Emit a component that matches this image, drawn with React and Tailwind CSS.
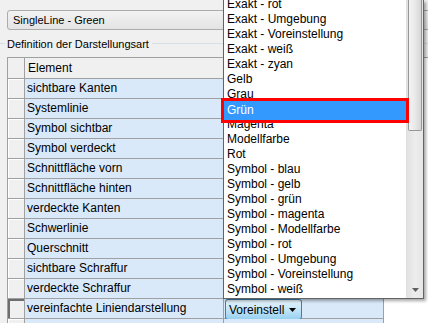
import React from "react";

const rows = [
  "sichtbare Kanten",
  "Systemlinie",
  "Symbol sichtbar",
  "Symbol verdeckt",
  "Schnittfläche vorn",
  "Schnittfläche hinten",
  "verdeckte Kanten",
  "Schwerlinie",
  "Querschnitt",
  "sichtbare Schraffur",
  "verdeckte Schraffur",
  "vereinfachte Liniendarstellung",
  "",
];

const colours = [
  "Exakt - rot",
  "Exakt - Umgebung",
  "Exakt - Voreinstellung",
  "Exakt - weiß",
  "Exakt - zyan",
  "Gelb",
  "Grau",
  "Grün",
  "Magenta",
  "Modellfarbe",
  "Rot",
  "Symbol - blau",
  "Symbol - gelb",
  "Symbol - grün",
  "Symbol - magenta",
  "Symbol - Modellfarbe",
  "Symbol - rot",
  "Symbol - Umgebung",
  "Symbol - Voreinstellung",
  "Symbol - weiß",
];

const DownTriangle = ({ className }) => (
  <svg width="7" height="4" viewBox="0 0 7 4" className={className}>
    <path d="M0 0h7L3.5 4z" fill="currentColor" />
  </svg>
);

const App = () => {
  return (
    <div className="relative w-[428px] h-[323px] overflow-hidden bg-[#f0f0f0] pt-[10px] font-['Liberation_Sans',Arial,sans-serif] text-black">
      {/* Top combobox */}
      <div className="ml-[7px] w-[440px] h-[20px] flex items-center pl-[5px] rounded-[3px] border border-[#acacac] bg-linear-to-b from-[#f2f2f2] to-[#e4e4e4] text-[11px]">
        SingleLine - Green
      </div>

      {/* Group box caption */}
      <div className="mt-[8px] h-[13px] flex items-start">
        <div className="w-[5px] h-px mt-[5px] bg-[#d5dfe5]" />
        <span className="ml-[2px] leading-[13px] text-[11px]">
          Definition der Darstellungsart
        </span>
        <div className="flex-1 h-px mt-[5px] ml-[3px] bg-[#d5dfe5]" />
      </div>

      {/* Grid */}
      <div className="mt-[6px] ml-[7px] border-l border-t border-[#a0a0a0] bg-white text-[12px]">
        {/* Header */}
        <div className="flex h-[21px]">
          <div className="w-[17px] shrink-0 border-r border-b border-[#a0a0a0] bg-[#f0f0f0]" />
          <div className="w-[199px] shrink-0 border-r border-b border-[#a0a0a0] bg-[#f0f0f0] pl-[3px] leading-[20px]">
            Element
          </div>
          <div className="w-[160px] shrink-0 border-r border-b border-[#a0a0a0] bg-[#f0f0f0]" />
        </div>

        {rows.map((label, i) => {
          const current = i === 11;
          return (
            <div key={i} className="flex h-[20px]">
              <div
                className={`w-[17px] shrink-0 border-r border-b border-[#a0a0a0] bg-[#f0f0f0] ${
                  current ? "shadow-[inset_2px_2px_0_#6d6d6d]" : "shadow-[inset_1px_1px_0_#ffffff]"
                }`}
              />
              <div className="w-[199px] shrink-0 border-r border-b border-[#a0a0a0] bg-[#dae9fa] pl-[2px] leading-[19px] whitespace-nowrap overflow-hidden">
                {label}
              </div>
              <div className="w-[160px] shrink-0 border-r border-b border-[#a0a0a0] bg-[#dae9fa]">
                {current && (
                  <div className="ml-[1px] w-[77px] h-[21px] flex items-center justify-between pl-[3px] pr-[5px] rounded-[3px] border border-[#3c7fb1] bg-linear-to-b from-[#e8f5fd] via-[#c4e5f6] to-[#98d1ef]">
                    <span className="leading-[18px]">Voreinstell</span>
                    <DownTriangle className="text-black" />
                  </div>
                )}
              </div>
            </div>
          );
        })}
      </div>

      {/* Open dropdown list */}
      <div className="absolute left-[223px] top-0 w-[201px] h-[299px] flex bg-white border-x border-b border-[#646464] shadow-[2px_2px_3px_rgba(0,0,0,0.35)] text-[12px]">
        <div className="flex-1 overflow-hidden">
          <div className="-mt-[3px]">
            {colours.map((c) => (
              <div
                key={c}
                className={`h-[15px] leading-[15px] pl-[3px] whitespace-nowrap ${
                  c === "Grün" ? "bg-[#3399ff] text-white" : ""
                }`}
              >
                {c}
              </div>
            ))}
          </div>
        </div>

        {/* Scrollbar */}
        <div className="w-[17px] shrink-0 flex flex-col bg-linear-to-r from-[#e2e2e2] via-[#ededed] to-[#e6e6e6] border-l border-[#e0e0e0]">
          <div className="mx-[1px] h-[131px] rounded-b-[2px] border-x border-b border-[#979797] bg-linear-to-r from-[#f4f4f4] via-[#e9e9e9] to-[#d5d5d5]" />
          <div className="flex-1" />
          <div className="h-[17px] flex items-center justify-center">
            <DownTriangle className="text-[#606060]" />
          </div>
        </div>
      </div>

      {/* Annotation: highlighted selection */}
      <div className="absolute left-[221px] top-[98px] w-[188px] h-[25px] border-[3px] border-[#ff0000] bg-[#3399ff] text-white pl-[3px] leading-[19px] text-[12px]">
        Grün
      </div>
    </div>
  );
};

export default App;
